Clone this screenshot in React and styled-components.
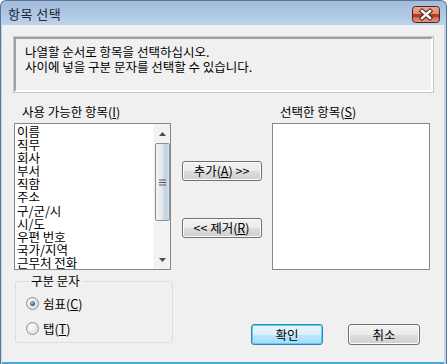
import styled, { createGlobalStyle } from "styled-components";

const GlobalStyle = createGlobalStyle`
  html, body {
    margin: 0;
    padding: 0;
    background: #ffffff;
  }
  body {
    font-family: "Noto Sans CJK KR", "Noto Sans", sans-serif;
    font-size: 12px;
    color: #000;
  }
`;

const Window = styled.div`
  box-sizing: border-box;
  width: 447px;
  height: 364px;
  display: flex;
  flex-direction: column;
  border: 1px solid #5d7594;
  border-bottom: none;
  border-radius: 6px 6px 0 0;
  background: linear-gradient(#a2bcdb 0px, #b0c8e4 14px, #bcd3ec 24px, #bfd6ee 100%);
  overflow: hidden;
`;

const TitleBar = styled.div`
  height: 24px;
  flex: none;
  display: flex;
  align-items: center;
  justify-content: space-between;
  padding: 0 6px 0 7px;
`;

const Title = styled.span`
  font-size: 13px;
  color: #1b2a3c;
  letter-spacing: 0.5px;
`;

const CloseIcon = styled.svg`
  display: block;
  margin-top: 2px;
`;

const Body = styled.div`
  flex: 1;
  margin: 0 2px 0 1px;
  background: #f0f0f0;
  border-bottom: 2px solid #4aa8dc;
  box-shadow: 0 1px 0 #2c4d6b;
  padding: 12px 12px 0 12px;
  display: flex;
  flex-direction: column;
`;

const InfoBox = styled.div`
  box-sizing: border-box;
  height: 55px;
  width: 419px;
  border: 2px solid;
  border-color: #a0a0a0 #ffffff #ffffff #a0a0a0;
  outline: 1px solid #c8c8c8;
  padding: 5px 9px;
  line-height: 15px;
  font-size: 12.5px;
`;

const Lists = styled.div`
  display: flex;
  margin-top: 13px;
`;

const Column = styled.div`
  display: flex;
  flex-direction: column;
`;

const Label = styled.div`
  height: 18px;
  padding-left: 8px;
  line-height: 14px;
  font-size: 12.5px;
`;

const ListBox = styled.div`
  box-sizing: border-box;
  width: ${(p) => p.$w}px;
  height: 147px;
  border: 1px solid #828790;
  background: #ffffff;
  display: flex;
`;

const Items = styled.div`
  flex: 1;
  padding: 1px 0 0 2px;
  line-height: 13.1px;
  font-size: 12.5px;
  overflow: hidden;
`;

const ScrollBar = styled.div`
  width: 16px;
  background: #f2f2f2;
  border-left: 1px solid #f8f8f8;
  display: flex;
  flex-direction: column;
  align-items: center;
`;

const Arrow = styled.div`
  height: 19px;
  width: 16px;
  display: flex;
  align-items: center;
  justify-content: center;
`;

const Thumb = styled.div`
  box-sizing: border-box;
  width: 15px;
  height: 78px;
  border: 1px solid #8f8f8f;
  border-radius: 2px;
  background: linear-gradient(90deg, #f4f4f4 0%, #e8e8e8 45%, #cfdbe8 60%, #bdd1e4 80%, #dde6ee 100%);
  display: flex;
  align-items: center;
  justify-content: center;
`;

const Spacer = styled.div`
  flex: 1;
`;

const Middle = styled.div`
  width: 101px;
  display: flex;
  flex-direction: column;
  align-items: center;
  padding-top: 56px;
  gap: 37px;
`;

const Button = styled.button`
  box-sizing: border-box;
  width: ${(p) => p.$w || 80}px;
  height: ${(p) => p.$h || 20}px;
  border: 1px solid ${(p) => (p.$primary ? "#3c7fb1" : "#707070")};
  border-radius: 3px;
  padding: 0;
  font-family: "Noto Sans CJK KR", "Noto Sans", sans-serif;
  font-size: 12.5px;
  line-height: 14px;
  color: #000;
  box-shadow: inset 0 0 0 1px ${(p) => (p.$primary ? "#48d8fb" : "#fcfcfc")};
  background: ${(p) =>
    p.$primary
      ? "linear-gradient(#eaf6fd 0%, #d9f0fc 50%, #bee6fd 51%, #a7d9f5 100%)"
      : "linear-gradient(#f2f2f2 0%, #ebebeb 50%, #dddddd 51%, #cfcfcf 100%)"};
  text-align: center;
`;

const Bottom = styled.div`
  display: flex;
  align-items: flex-start;
  margin-top: 5px;
`;

const Group = styled.fieldset`
  box-sizing: border-box;
  width: 158px;
  height: 68px;
  margin: 0 0 0 1px;
  padding: 7px 0 0 10px;
  border: 1px solid #d5dfe5;
  border-radius: 3px;
  display: flex;
  flex-direction: column;
  gap: 7px;
`;

const Legend = styled.legend`
  padding: 0 2px;
  margin-left: 3px;
  font-size: 12.5px;
  line-height: 12px;
`;

const RadioRow = styled.label`
  display: flex;
  align-items: center;
  gap: 4px;
  height: 18px;
  font-size: 12.5px;
`;

const Radio = styled.span`
  box-sizing: border-box;
  width: 13px;
  height: 13px;
  border-radius: 50%;
  border: 1px solid #8e8f8f;
  background: radial-gradient(circle at 40% 40%, #ffffff 0%, #e0e0e0 70%, #cfcfcf 100%);
  display: flex;
  align-items: center;
  justify-content: center;
  &::after {
    content: "";
    width: 5px;
    height: 5px;
    border-radius: 50%;
    display: ${(p) => (p.$checked ? "block" : "none")};
    background: radial-gradient(circle at 40% 35%, #8fd0f5 0%, #2b6aa3 60%, #173e6c 100%);
  }
`;

const Actions = styled.div`
  display: flex;
  gap: 25px;
  margin-left: 78px;
  margin-top: 49px;
`;

const items = [
  "이름",
  "직무",
  "회사",
  "부서",
  "직함",
  "주소",
  "구/군/시",
  "시/도",
  "우편 번호",
  "국가/지역",
  "근무처 전화",
];

function ArrowIcon({ down }) {
  return (
    <svg width="7" height="4" viewBox="0 0 7 4">
      <path d={down ? "M0 0 H7 L3.5 4 Z" : "M0 4 H7 L3.5 0 Z"} fill="#4d4d4d" />
    </svg>
  );
}

function Close() {
  return (
    <CloseIcon width="28" height="17" viewBox="0 0 28 17">
      <defs>
        <linearGradient id="closeFill" x1="0" y1="0" x2="0" y2="1">
          <stop offset="0" stopColor="#eeab90" />
          <stop offset="0.45" stopColor="#dc8a6c" />
          <stop offset="0.46" stopColor="#b33c24" />
          <stop offset="0.64" stopColor="#b33c24" />
          <stop offset="0.65" stopColor="#cf6a4e" />
          <stop offset="1" stopColor="#e69a7e" />
        </linearGradient>
      </defs>
      <rect x="0.5" y="0.5" width="27" height="16" rx="3" fill="url(#closeFill)" stroke="#47261f" />
      <path d="M10 5 L18 12 M18 5 L10 12" stroke="#4a2018" strokeWidth="4.4" strokeLinecap="square" />
      <path d="M10 5 L18 12 M18 5 L10 12" stroke="#ffffff" strokeWidth="2.4" strokeLinecap="square" />
    </CloseIcon>
  );
}

export default function App() {
  return (
    <>
      <GlobalStyle />
      <Window>
        <TitleBar>
          <Title>항목 선택</Title>
          <Close />
        </TitleBar>
        <Body>
          <InfoBox>
            나열할 순서로 항목을 선택하십시오.
            <br />
            사이에 넣을 구분 문자를 선택할 수 있습니다.
          </InfoBox>
          <Lists>
            <Column>
              <Label>
                사용 가능한 항목(<u>I</u>)
              </Label>
              <ListBox $w={157}>
                <Items>
                  {items.map((it) => (
                    <div key={it}>{it}</div>
                  ))}
                </Items>
                <ScrollBar>
                  <Arrow>
                    <ArrowIcon />
                  </Arrow>
                  <Thumb>
                    <svg width="7" height="7" viewBox="0 0 7 7">
                      <path d="M0 1 H7 M0 3.5 H7 M0 6 H7" stroke="#555" strokeWidth="1" />
                    </svg>
                  </Thumb>
                  <Spacer />
                  <Arrow>
                    <ArrowIcon down />
                  </Arrow>
                </ScrollBar>
              </ListBox>
            </Column>
            <Middle>
              <Button>
                추가(<u>A</u>) &gt;&gt;
              </Button>
              <Button>
                &lt;&lt; 제거(<u>R</u>)
              </Button>
            </Middle>
            <Column>
              <Label>
                선택한 항목(<u>S</u>)
              </Label>
              <ListBox $w={158} />
            </Column>
          </Lists>
          <Bottom>
            <Group>
              <Legend>구분 문자</Legend>
              <RadioRow>
                <Radio $checked />
                <span>
                  쉼표(<u>C</u>)
                </span>
              </RadioRow>
              <RadioRow>
                <Radio />
                <span>
                  탭(<u>T</u>)
                </span>
              </RadioRow>
            </Group>
            <Actions>
              <Button $primary $w={72} $h={21}>
                확인
              </Button>
              <Button $w={72} $h={21}>
                취소
              </Button>
            </Actions>
          </Bottom>
        </Body>
      </Window>
    </>
  );
}
